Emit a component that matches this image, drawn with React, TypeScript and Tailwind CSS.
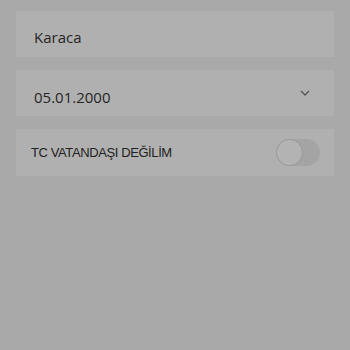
export default function App() {
  return (
    <div className="w-[350px] h-[350px] bg-[#a9a9a9] px-4 pt-[11px] flex flex-col gap-[13px]" style={{ fontFamily: '"Open Sans", "Liberation Sans", sans-serif' }}>
      <div className="h-[46px] bg-[#b0b0b0] flex items-center pl-[18px] pt-[6px] text-[15px] text-[#262626]">Karaca</div>
      <div className="h-[46px] bg-[#b0b0b0] flex items-center justify-between pl-[18px] pr-[24px] text-[15px] text-[#262626]">
        <span className="mt-[9px]">05.01.2000</span>
        <svg width="10" height="6" viewBox="0 0 10 6" className="mb-[1px]"><path d="M1 1 L5 5 L9 1" fill="none" stroke="#555" strokeWidth="1.3" /></svg>
      </div>
      <div className="h-[47px] bg-[#b0b0b0] flex items-center justify-between pl-[15px] pr-[14px] text-[13px] tracking-[-0.4px] text-[#222]" style={{ fontFamily: '"Liberation Sans", Arial, sans-serif' }}>
        <span>TC VATANDAŞI DEĞİLİM</span>
        <div className="w-[44px] h-[27px] rounded-full bg-[#a4a4a4] relative">
          <div className="absolute left-0 top-0 w-[27px] h-[27px] rounded-full bg-[#b3b3b3] border border-[#9a9a9a]" />
        </div>
      </div>
    </div>
  );
}
